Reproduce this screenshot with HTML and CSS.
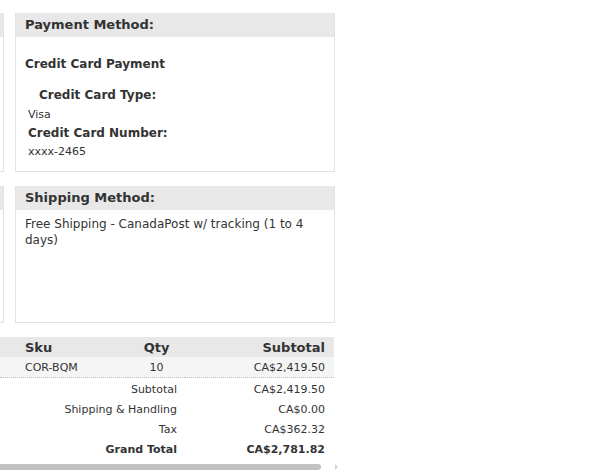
FILE: index.html
```html
<!DOCTYPE html>
<html>
<head>
<meta charset="utf-8">
<link rel="stylesheet" href="styles.css">
</head>
<body>
<div class="page">
  <div class="row">
    <div class="box box-stub"><div class="box-title">&nbsp;</div><div class="box-body stub-body1"></div></div>
    <div class="box">
      <div class="box-title">Payment Method:</div>
      <div class="box-body pay-body">
        <div class="pay-name">Credit Card Payment</div>
        <div class="pay-label pay-type">Credit Card Type:</div>
        <div class="pay-value">Visa</div>
        <div class="pay-label">Credit Card Number:</div>
        <div class="pay-value">xxxx-2465</div>
      </div>
    </div>
  </div>
  <div class="row">
    <div class="box box-stub"><div class="box-title">&nbsp;</div><div class="box-body stub-body2"></div></div>
    <div class="box">
      <div class="box-title">Shipping Method:</div>
      <div class="box-body ship-body">Free Shipping - CanadaPost w/ tracking (1 to 4 days)</div>
    </div>
  </div>
  <table class="items">
    <colgroup><col class="c1"><col class="c2"><col class="c3"></colgroup>
    <thead>
      <tr><th class="sku">Sku</th><th class="qty">Qty</th><th class="amt">Subtotal</th></tr>
    </thead>
    <tbody>
      <tr class="item"><td class="sku">COR-BQM</td><td class="qty">10</td><td class="amt">CA$2,419.50</td></tr>
    </tbody>
    <tfoot>
      <tr><td colspan="2" class="lbl">Subtotal</td><td class="amt">CA$2,419.50</td></tr>
      <tr><td colspan="2" class="lbl">Shipping &amp; Handling</td><td class="amt">CA$0.00</td></tr>
      <tr><td colspan="2" class="lbl">Tax</td><td class="amt">CA$362.32</td></tr>
      <tr class="grand"><td colspan="2" class="lbl">Grand Total</td><td class="amt">CA$2,781.82</td></tr>
    </tfoot>
  </table>
  <div class="scroll">
    <div class="scroll-thumb"></div>
    <div class="scroll-arrow"></div>
  </div>
</div>
</body>
</html>
```
FILE: styles.css
```css
html, body {
  margin: 0;
  padding: 0;
  background: #fff;
}
body {
  font-family: "DejaVu Sans", Verdana, sans-serif;
  color: #333;
  font-size: 11px;
}
.page {
  padding-top: 13px;
  width: 340px;
}
.row {
  display: flex;
  gap: 11px;
  margin-bottom: 14px;
}
.box {
  width: 320px;
  box-sizing: border-box;
  border: 1px solid #e2e2e2;
  border-top: none;
  display: flex;
  flex-direction: column;
}
.box-stub {
  width: 4px;
  border-left: none;
}
.box-title {
  background: #e8e8e8;
  height: 24px;
  line-height: 24px;
  padding: 0 9px;
  font-weight: bold;
  font-size: 13px;
  white-space: nowrap;
  overflow: hidden;
}
.box-stub .box-title {
  padding: 0;
}
.box-body {
  padding: 0 9px;
}
.pay-body {
  height: 134px;
  box-sizing: border-box;
  padding-top: 18px;
}
.pay-name {
  font-weight: bold;
  font-size: 12px;
  line-height: 18px;
  margin-bottom: 13px;
}
.pay-label {
  font-weight: bold;
  font-size: 12px;
  line-height: 18px;
  padding-left: 3px;
}
.pay-type {
  padding-left: 14px;
  margin-bottom: 1px;
}
.pay-value {
  font-size: 11px;
  line-height: 20px;
  padding-left: 3px;
}
.pay-value + .pay-label {
  margin-top: -1px;
}
.ship-body {
  height: 112px;
  box-sizing: border-box;
  padding-top: 6px;
  font-size: 12px;
  line-height: 16px;
}
.items {
  margin-top: 1px;
  width: 334px;
  border-collapse: collapse;
  table-layout: fixed;
}
.c1 { width: 128px; }
.c2 { width: 57px; }
.c3 { width: 149px; }
.items th {
  background: #e8e8e8;
  font-size: 13px;
  font-weight: bold;
  height: 19px;
  padding: 1px 0 0;
  line-height: 19px;
}
.items td {
  height: 19px;
  padding: 1px 0 0;
  line-height: 19px;
  white-space: nowrap;
}
.items tfoot td {
  padding-top: 3px;
  height: 17px;
  line-height: 17px;
}
.items .sku {
  text-align: left;
  padding-left: 25px;
}
.items .qty {
  text-align: center;
}
.items .amt {
  text-align: right;
  padding-right: 9px;
}
.items .lbl {
  text-align: right;
  padding-right: 8px;
}
.item td {
  background: #f5f5f5;
  border-bottom: 1px dotted #bbb;
}
.grand td {
  font-weight: bold;
}
.scroll {
  margin-top: 5px;
  display: flex;
  align-items: center;
  height: 8px;
}
.scroll-thumb {
  width: 321px;
  height: 6px;
  background: #c1c1c1;
  border-radius: 0 3px 3px 0;
}
.scroll-arrow {
  margin-left: 14px;
  width: 0;
  height: 0;
  border-top: 3px solid transparent;
  border-bottom: 3px solid transparent;
  border-left: 3px solid #d0d0d0;
}
```
